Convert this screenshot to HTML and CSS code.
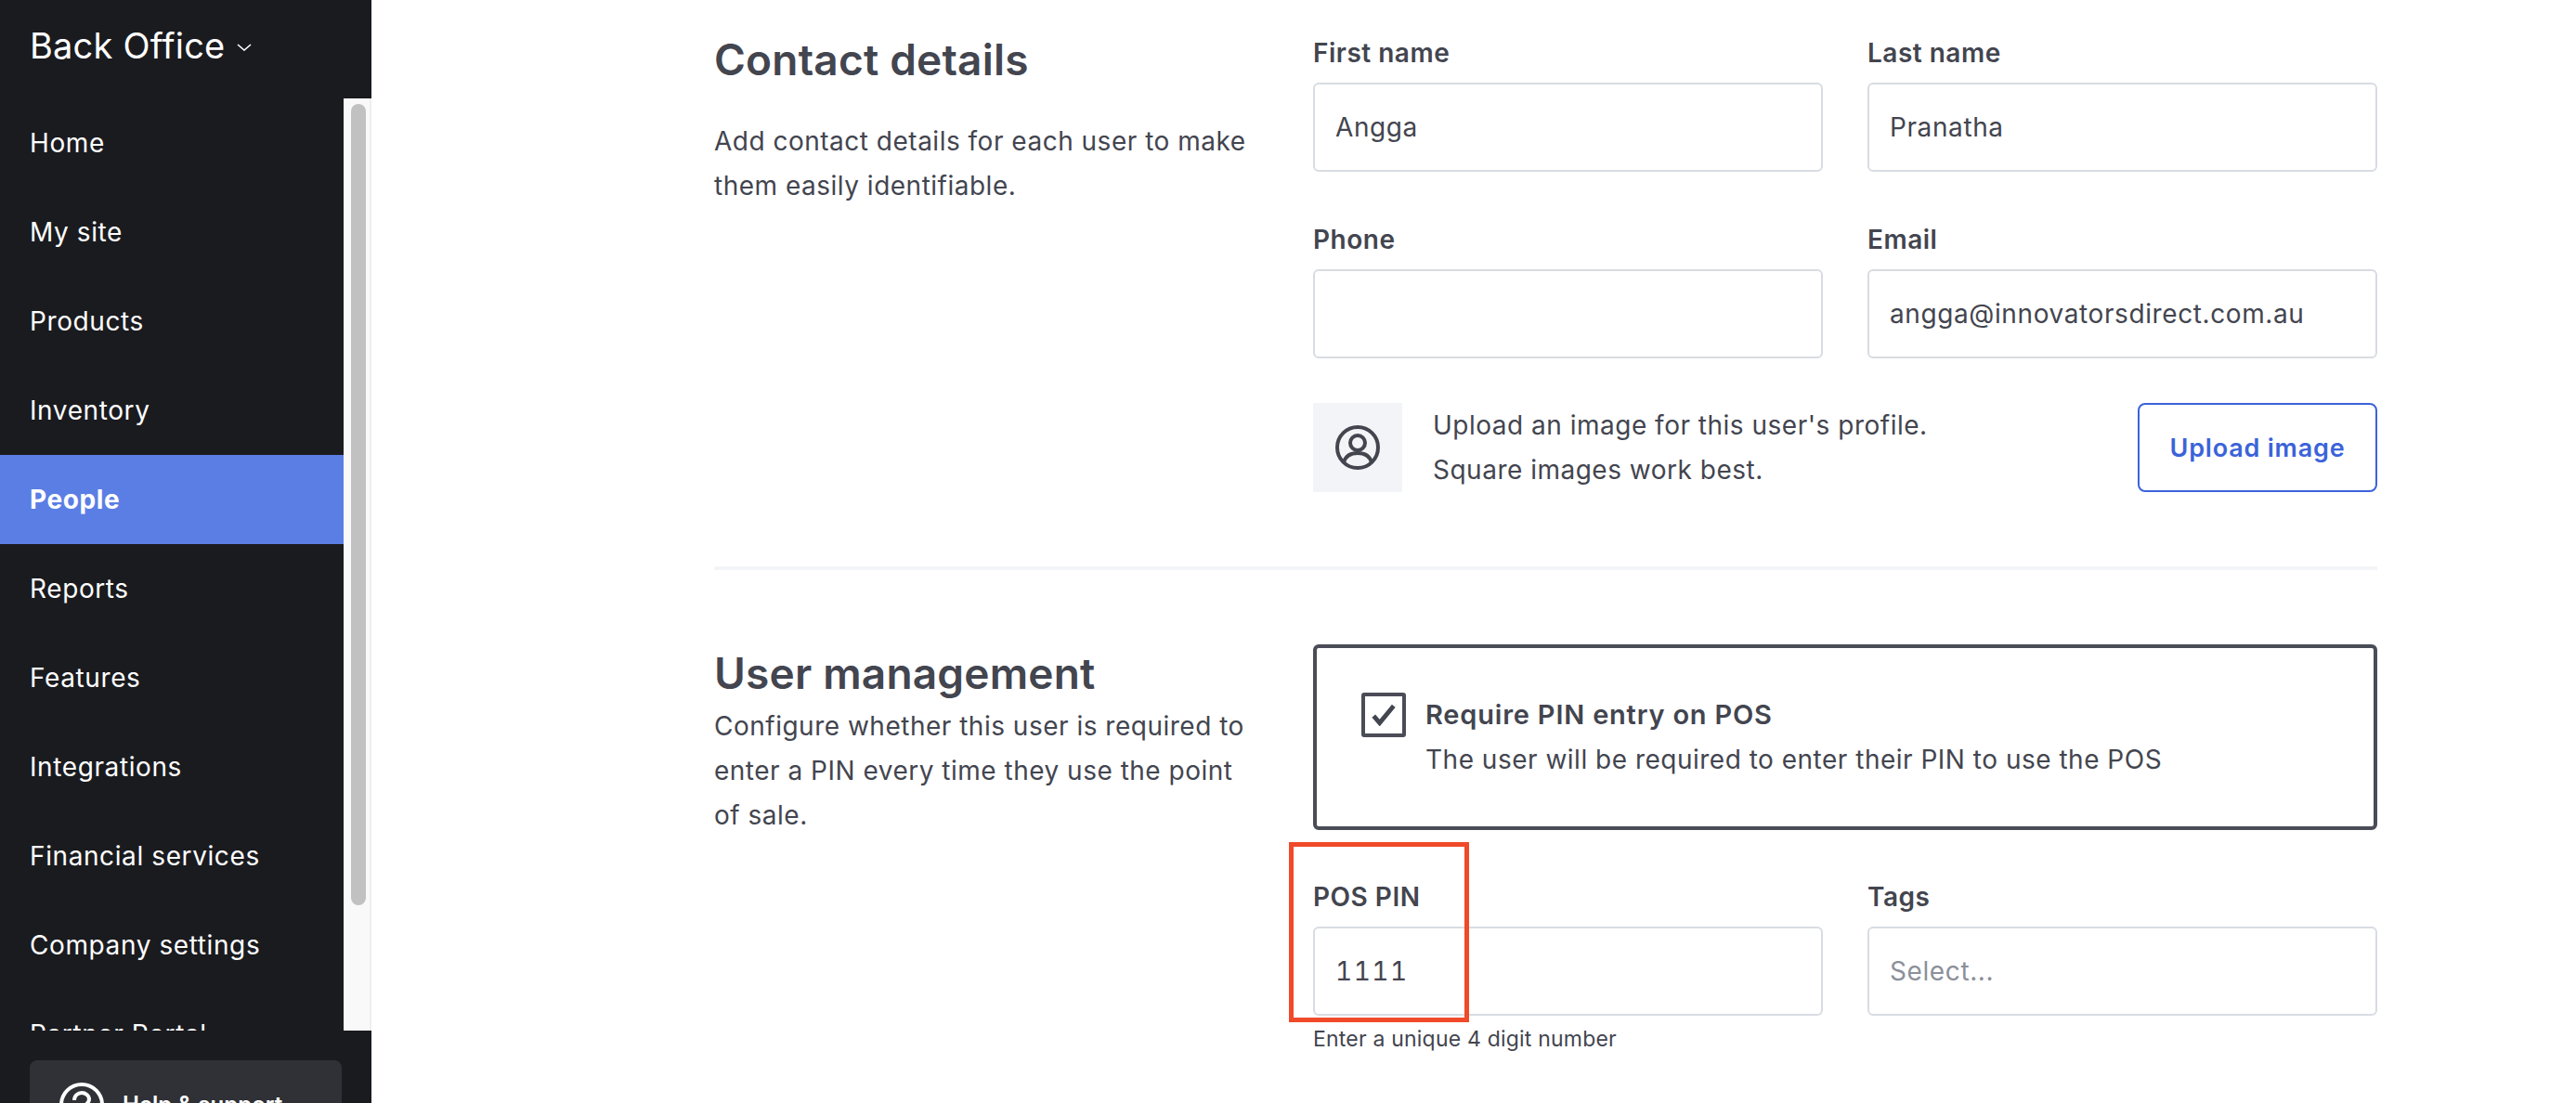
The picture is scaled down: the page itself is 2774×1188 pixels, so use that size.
FILE: index.html
```html
<!DOCTYPE html>
<html lang="en">
<head>
    <meta charset="UTF-8">
    <title>Back Office - Edit user</title>
    <link rel="stylesheet" href="styles.css">
</head>
<body>
    <aside class="sidebar">
        <div class="brand">
            <span>Back Office</span>
            <svg class="brand-chevron" viewBox="0 0 16 8" fill="none" stroke="#fff" stroke-width="1.6"><path d="M1 1l7 6 7-6"/></svg>
        </div>
        <div class="nav-wrap">
            <nav class="nav">
                <a class="nav-item">Home</a>
                <a class="nav-item">My site</a>
                <a class="nav-item">Products</a>
                <a class="nav-item">Inventory</a>
                <a class="nav-item active">People</a>
                <a class="nav-item">Reports</a>
                <a class="nav-item">Features</a>
                <a class="nav-item">Integrations</a>
                <a class="nav-item">Financial services</a>
                <a class="nav-item">Company settings</a>
                <a class="nav-item">Partner Portal</a>
            </nav>
            <div class="scrollbar"><div class="scroll-thumb"></div></div>
        </div>
        <div class="help-wrap">
            <div class="help">
                <svg class="help-icon" viewBox="0 0 48 48" fill="none" stroke="#fff" stroke-width="4"><circle cx="24" cy="24" r="22"/><path d="M16 19c0-5 4-8 8-8s8 3 8 7c0 6-8 6-8 13"/><path d="M24 35v4"/></svg>
                <span>Help &amp; support</span>
            </div>
        </div>
    </aside>

    <main class="main">
        <section class="section section-contact">
            <div class="intro">
                <h2>Contact details</h2>
                <p class="contact-text">Add contact details for each user to make them easily identifiable.</p>
            </div>
            <div class="fields">
                <div class="field-grid">
                    <div class="field">
                        <label>First name</label>
                        <div class="input">Angga</div>
                    </div>
                    <div class="field">
                        <label>Last name</label>
                        <div class="input">Pranatha</div>
                    </div>
                    <div class="field">
                        <label>Phone</label>
                        <div class="input"></div>
                    </div>
                    <div class="field">
                        <label>Email</label>
                        <div class="input">angga@innovatorsdirect.com.au</div>
                    </div>
                </div>
                <div class="upload-row">
                    <div class="avatar">
                        <svg viewBox="0 0 48 48" width="48" height="48" fill="none" stroke="#43454f" stroke-width="4"><circle cx="24" cy="24" r="22"/><circle cx="24" cy="19" r="8"/><path d="M9 40c2-7 8-10 15-10s13 3 15 10"/></svg>
                    </div>
                    <p class="upload-text">Upload an image for this user's profile.<br>Square images work best.</p>
                    <button class="upload-btn" type="button">Upload image</button>
                </div>
            </div>
        </section>

        <section class="section section-users">
            <div class="intro">
                <h2>User management</h2>
                <p class="users-text">Configure whether this user is required to enter a PIN every time they use the point of sale.</p>
            </div>
            <div class="fields">
                <div class="pin-box">
                    <div class="checkbox">
                        <svg viewBox="0 0 26 22" fill="none" stroke="#43454f" stroke-width="4.5"><path d="M3 12l6 7L23 2"/></svg>
                    </div>
                    <div>
                        <div class="pin-title">Require PIN entry on POS</div>
                        <div class="pin-desc">The user will be required to enter their PIN to use the POS</div>
                    </div>
                </div>
                <div class="field-grid bottom-grid">
                    <div class="field pin-field">
                        <label>POS PIN</label>
                        <div class="input pin-value">1111</div>
                        <div class="hint">Enter a unique 4 digit number</div>
                        <div class="highlight"></div>
                    </div>
                    <div class="field">
                        <label>Tags</label>
                        <div class="input placeholder">Select...</div>
                    </div>
                </div>
            </div>
        </section>
    </main>
</body>
</html>
```

FILE: styles.css
```css
html, body {
    margin: 0;
    height: 100%;
    overflow: hidden;
}
body {
    display: flex;
    height: 1188px;
    background-color: #fff;
    font-family: "Inter", "Liberation Sans", sans-serif;
    color: #43454f;
    font-size: 28px;
    letter-spacing: 0.5px;
}

/* sidebar */
.sidebar {
    width: 400px;
    flex-shrink: 0;
    height: 1188px;
    display: flex;
    flex-direction: column;
    background-color: #1a1b1f;
    color: #fff;
    overflow: hidden;
}
.brand {
    height: 106px;
    flex-shrink: 0;
    display: flex;
    align-items: flex-start;
    padding: 25px 0 0 32px;
    box-sizing: border-box;
    font-size: 38px;
    line-height: 48px;
    letter-spacing: 0.2px;
}
.brand-chevron {
    width: 16px;
    height: 8px;
    margin: 22px 0 0 13px;
}
.nav-wrap {
    height: 1004px;
    flex-shrink: 0;
    display: flex;
    overflow: hidden;
}
.nav {
    width: 370px;
    flex-shrink: 0;
}
.nav-item {
    display: block;
    height: 96px;
    line-height: 96px;
    padding-left: 32px;
    letter-spacing: 0.6px;
}
.nav-item.active {
    background-color: #5b7ee5;
    font-weight: 700;
}
.scrollbar {
    width: 30px;
    background-color: #f9f9f9;
    border-right: 2px solid #eee;
    box-sizing: border-box;
    padding: 6px 4px 0 8px;
}
.scroll-thumb {
    height: 863px;
    width: 16px;
    background-color: #c1c1c1;
    border-radius: 8px;
}
.help-wrap {
    padding: 32px 32px 0;
}
.help {
    height: 120px;
    background-color: #2f3136;
    border-radius: 8px;
    display: flex;
    align-items: flex-start;
    padding: 24px 0 0 32px;
    box-sizing: border-box;
    font-size: 24px;
    font-weight: 600;
    letter-spacing: 0;
}
.help-icon {
    width: 48px;
    height: 48px;
    margin-right: 20px;
}
.help span {
    line-height: 48px;
}

/* main */
.main {
    flex: 1;
    padding: 36px 214px 0 369px;
}
.section {
    display: grid;
    grid-template-columns: 645px 1146px;
}
.section-contact {
    padding-bottom: 80px;
    border-bottom: 4px solid #f3f4f8;
}
.section-users {
    padding-top: 80px;
}
h2 {
    margin: 0;
    font-size: 46px;
    line-height: 56px;
    font-weight: 600;
    letter-spacing: 0.2px;
}
.intro p {
    margin: 0;
    width: 590px;
    line-height: 48px;
}
.contact-text {
    padding-top: 36px;
}
.section-users .intro {
    padding-top: 3px;
}
.users-text {
    padding-top: 5px;
}
.section-contact .fields {
    padding-top: 4px;
}
.field-grid {
    display: grid;
    grid-template-columns: 549px 549px;
    column-gap: 48px;
    row-gap: 56px;
}
.field {
    position: relative;
}
label {
    display: block;
    height: 34px;
    line-height: 34px;
    margin-bottom: 15px;
    font-weight: 600;
}
.input {
    height: 96px;
    box-sizing: border-box;
    border: 2px solid #d8dce2;
    border-radius: 6px;
    padding: 0 22px;
    line-height: 92px;
    letter-spacing: 0.6px;
}
.pin-value {
    font-variant-numeric: tabular-nums;
    letter-spacing: 1.5px;
}
.placeholder {
    color: #8b909a;
}
.upload-row {
    display: flex;
    align-items: center;
    margin-top: 48px;
}
.avatar {
    width: 96px;
    height: 96px;
    background-color: #f3f4f8;
    display: flex;
    align-items: center;
    justify-content: center;
}
.upload-text {
    flex: 1;
    margin: 0 0 0 33px;
    line-height: 48px;
}
.upload-btn {
    width: 258px;
    height: 96px;
    background-color: #fff;
    border: 2px solid #3b63d9;
    border-radius: 8px;
    color: #3b63d9;
    font-family: inherit;
    font-size: 27px;
    font-weight: 600;
    letter-spacing: 0.8px;
}
.pin-box {
    height: 200px;
    box-sizing: border-box;
    border: 4px solid #4a4d57;
    border-radius: 6px;
    display: flex;
    align-items: flex-start;
    padding: 48px 0 0 48px;
}
.checkbox {
    width: 48px;
    height: 48px;
    box-sizing: border-box;
    border: 4px solid #4a4d57;
    border-radius: 3px;
    display: flex;
    align-items: center;
    justify-content: center;
    flex-shrink: 0;
    margin-right: 21px;
}
.checkbox svg {
    width: 28px;
    height: 24px;
}
.pin-title {
    font-size: 29px;
    font-weight: 600;
    line-height: 48px;
    letter-spacing: 0.8px;
}
.pin-desc {
    line-height: 48px;
}
.bottom-grid {
    margin-top: 55px;
}
.hint {
    font-size: 23px;
    line-height: 34px;
    margin-top: 8px;
    letter-spacing: 0.2px;
}
.highlight {
    position: absolute;
    left: -26px;
    top: -42px;
    width: 194px;
    height: 194px;
    box-sizing: border-box;
    border: 5px solid #f04a2a;
}
```
